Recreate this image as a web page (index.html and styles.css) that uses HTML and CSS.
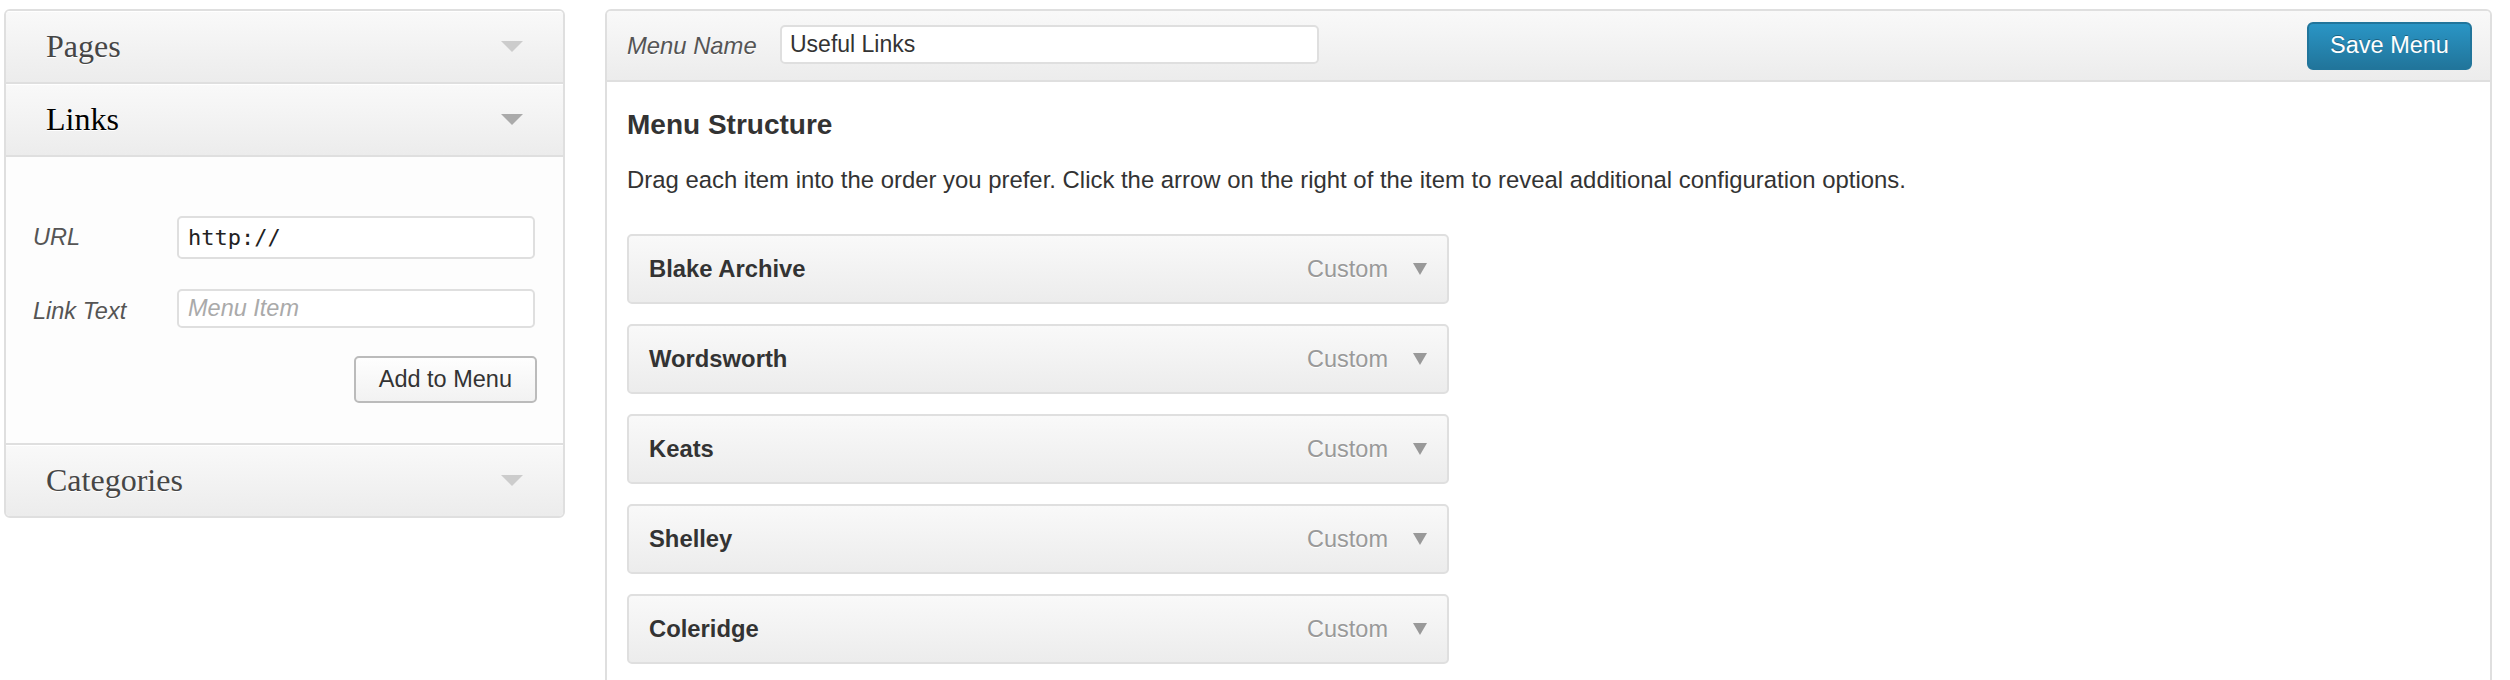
FILE: index.html
```html
<!DOCTYPE html>
<html lang="en">
  <head>
    <meta charset="UTF-8" />
    <meta name="viewport" content="width=device-width, initial-scale=1.0" />
    <title>Menus</title>
    <link rel="stylesheet" href="styles.css">
  </head>
  <body>
    <div class="wrap">
      <div class="accordion">
        <div class="section">
          <h3 class="section-title">Pages<span class="arrow"></span></h3>
        </div>
        <div class="section open">
          <h3 class="section-title">Links<span class="arrow"></span></h3>
          <div class="section-body">
            <div class="field-row">
              <label class="field-label">URL</label>
              <input class="field-input code url" type="text" value="http://" />
            </div>
            <div class="field-row">
              <label class="field-label">Link Text</label>
              <input class="field-input link-text" type="text" placeholder="Menu Item" />
            </div>
            <div class="button-row">
              <button class="button">Add to Menu</button>
            </div>
          </div>
        </div>
        <div class="section">
          <h3 class="section-title">Categories<span class="arrow"></span></h3>
        </div>
      </div>

      <div class="menu-edit">
        <div class="menu-header">
          <label class="menu-name-label">Menu Name</label>
          <input class="menu-name" type="text" value="Useful Links" />
          <button class="button-primary">Save Menu</button>
        </div>
        <div class="menu-body">
          <h2 class="menu-title">Menu Structure</h2>
          <p class="menu-help">Drag each item into the order you prefer. Click the arrow on the right of the item to reveal additional configuration options.</p>
          <ul class="menu-items">
            <li class="menu-item"><span class="item-title">Blake Archive</span><span class="item-type">Custom</span><span class="item-arrow"></span></li>
            <li class="menu-item"><span class="item-title">Wordsworth</span><span class="item-type">Custom</span><span class="item-arrow"></span></li>
            <li class="menu-item"><span class="item-title">Keats</span><span class="item-type">Custom</span><span class="item-arrow"></span></li>
            <li class="menu-item"><span class="item-title">Shelley</span><span class="item-type">Custom</span><span class="item-arrow"></span></li>
            <li class="menu-item"><span class="item-title">Coleridge</span><span class="item-type">Custom</span><span class="item-arrow"></span></li>
          </ul>
        </div>
      </div>
    </div>
  </body>
</html>
```

FILE: styles.css
```css
body {
  margin: 0;
  background-color: #fff;
  font-family: "Liberation Sans", Arial, sans-serif;
  font-size: 23.5px;
  color: #333;
}
.wrap {
  display: flex;
  align-items: flex-start;
  gap: 40px;
  padding: 9px 18px 0 4px;
}

/* left accordion */
.accordion {
  width: 561px;
  flex: none;
  box-sizing: border-box;
  border: 2px solid #dfdfdf;
  border-radius: 6px;
  overflow: hidden;
}
.section {
  border-bottom: 2px solid #dfdfdf;
}
.section:last-child {
  border-bottom: 0;
}
.section-title {
  display: flex;
  justify-content: space-between;
  align-items: center;
  height: 71px;
  margin: 0;
  padding: 0 40px;
  box-sizing: border-box;
  background: linear-gradient(#f9f9f9, #ececec);
  box-shadow: inset 0 1px 0 #fff;
  font-family: "Liberation Serif", Georgia, serif;
  font-weight: normal;
  font-size: 32px;
  color: #464646;
  text-shadow: 0 1px 0 #fff;
}
.open .section-title {
  color: #000;
  border-bottom: 2px solid #dfdfdf;
  height: 73px;
}
.arrow {
  width: 0;
  height: 0;
  border-left: 11px solid transparent;
  border-right: 11px solid transparent;
  border-top: 11px solid #ccc;
}
.open .arrow {
  border-top-color: #aaa;
}
.section-body {
  background-color: #fdfdfd;
  padding: 59px 26px 40px 27px;
}
.field-row {
  display: flex;
  align-items: center;
  margin-bottom: 30px;
}
.field-row + .field-row {
  margin-bottom: 28px;
}
.field-row + .field-row .field-label {
  padding-top: 5px;
}
.field-label {
  width: 144px;
  flex: none;
  font-style: italic;
  color: #555;
}
.field-input {
  flex: 1;
  height: 39px;
  box-sizing: border-box;
  border: 2px solid #dfdfdf;
  border-radius: 5px;
  background: #fff;
  padding: 0 9px;
  font-family: "Liberation Sans", Arial, sans-serif;
  font-size: 23.5px;
  color: #333;
  margin-right: 2px;
}
.field-input.url {
  height: 43px;
}
.field-input::placeholder {
  color: #aaa;
  font-style: italic;
}
.code {
  font-family: "DejaVu Sans Mono", monospace;
  font-size: 22px;
  color: #222;
}
.button-row {
  display: flex;
  justify-content: flex-end;
}
.button {
  height: 47px;
  padding: 0 23px;
  border: 2px solid #bbb;
  border-radius: 5px;
  background: linear-gradient(#fefefe, #f2f2f2);
  font-family: "Liberation Sans", Arial, sans-serif;
  font-size: 23.5px;
  color: #333;
}

/* right menu editor */
.menu-edit {
  flex: 1;
  height: 700px;
  border: 2px solid #dfdfdf;
  border-radius: 6px 6px 0 0;
  overflow: hidden;
}
.menu-header {
  display: flex;
  align-items: center;
  height: 71px;
  box-sizing: border-box;
  padding: 0 18px 0 20px;
  border-bottom: 2px solid #dfdfdf;
  background: linear-gradient(#f9f9f9, #ececec);
}
.menu-name-label {
  width: 153px;
  flex: none;
  font-style: italic;
  font-size: 23.8px;
  color: #555;
  text-shadow: 0 1px 0 #fff;
}
.menu-name {
  width: 539px;
  height: 39px;
  box-sizing: border-box;
  border: 2px solid #dfdfdf;
  border-radius: 5px;
  padding: 0 8px;
  font-family: "Liberation Sans", Arial, sans-serif;
  font-size: 23px;
  color: #333;
  margin-top: -3px;
}
.button-primary {
  margin-left: auto;
  width: 165px;
  height: 48px;
  border: 2px solid #21759b;
  border-radius: 6px;
  background: linear-gradient(#2a95c5, #21759b);
  color: #fff;
  font-family: "Liberation Sans", Arial, sans-serif;
  font-size: 23.5px;
  text-shadow: 0 -1px 0 rgba(0, 0, 0, 0.3);
}
.menu-body {
  padding: 26px 20px 0 20px;
}
.menu-title {
  margin: 0 0 23px;
  font-size: 28px;
  line-height: 34px;
  color: #333;
}
.menu-help {
  margin: 0 0 39px;
  font-size: 23.9px;
  line-height: 30px;
}
.menu-items {
  list-style: none;
  margin: 0;
  padding: 0;
  display: flex;
  flex-direction: column;
  gap: 20px;
}
.menu-item {
  display: flex;
  align-items: center;
  width: 822px;
  height: 70px;
  box-sizing: border-box;
  padding: 0 20px 0 20px;
  border: 2px solid #dfdfdf;
  border-radius: 5px;
  background: linear-gradient(#f9f9f9, #ececec);
}
.item-title {
  font-weight: bold;
  font-size: 23.8px;
  color: #333;
}
.item-type {
  margin-left: auto;
  color: #999;
  text-shadow: 0 1px 0 #fff;
}
.item-arrow {
  margin-left: 25px;
  width: 0;
  height: 0;
  border-left: 7.5px solid transparent;
  border-right: 7.5px solid transparent;
  border-top: 12px solid #999;
}
```
